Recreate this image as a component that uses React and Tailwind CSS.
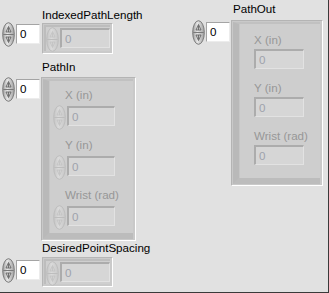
import React from "react";

function Spinner({ disabled = false, id }) {
  const stroke = disabled ? "#bdbdbd" : "#7a7a7a";
  const arrow = disabled ? "#c2c2c2" : "#5a5a5a";
  return (
    <svg width="13" height="25" viewBox="0 0 13 25" className="block shrink-0">
      <defs>
        <linearGradient id={id} x1="0" x2="1" y1="0" y2="0">
          {disabled ? (
            <>
              <stop offset="0" stopColor="#c4c4c4" />
              <stop offset="0.4" stopColor="#dadada" />
              <stop offset="1" stopColor="#c8c8c8" />
            </>
          ) : (
            <>
              <stop offset="0" stopColor="#9c9c9c" />
              <stop offset="0.4" stopColor="#e6e6e6" />
              <stop offset="1" stopColor="#a2a2a2" />
            </>
          )}
        </linearGradient>
      </defs>
      <ellipse cx="6.5" cy="12.5" rx="5.8" ry="11.8" fill={`url(#${id})`} stroke={stroke} strokeWidth="1" />
      <line x1="1.2" x2="11.8" y1="12.5" y2="12.5" stroke={stroke} strokeWidth="1" />
      <path d="M6.5 4.5 L9 10 L4 10 Z" fill={disabled ? "#d4d4d4" : "#cfcfcf"} stroke={arrow} strokeWidth="0.8" />
      <line x1="6.5" x2="6.5" y1="5.5" y2="10" stroke={arrow} strokeWidth="0.8" />
      <path d="M6.5 20.5 L9 15 L4 15 Z" fill={disabled ? "#d4d4d4" : "#cfcfcf"} stroke={arrow} strokeWidth="0.8" />
      <line x1="6.5" x2="6.5" y1="15" y2="19.5" stroke={arrow} strokeWidth="0.8" />
    </svg>
  );
}

function IndexDisplay({ id }) {
  return (
    <div className="flex items-start">
      <Spinner id={id} />
      <div className="mt-[2px] ml-[1px] w-[24px] h-[20px] bg-white border border-t-[#a4a4a4] border-l-[#a4a4a4] border-r-[#ececec] border-b-[#ececec] pl-[3px] leading-[18px] text-black">
        0
      </div>
    </div>
  );
}

function DisabledBox({ w }) {
  return (
    <div
      className="h-[20px] bg-[#d6d6d6] border-t-2 border-l-2 border-t-[#acacac] border-l-[#acacac] border-r border-b border-r-[#e2e2e2] border-b-[#e2e2e2] pl-[3px] leading-[17px] text-[#9ea2ac]"
      style={{ width: w }}
    >
      0
    </div>
  );
}

function ClusterField({ label, withSpinner, id, first }) {
  return (
    <div className={first ? "" : withSpinner ? "mt-[8px]" : "mt-[12px]"}>
      <div className={`h-[14px] text-[#979797] ${withSpinner ? "ml-[12px]" : "ml-[0px]"}`}>{label}</div>
      {withSpinner ? (
        <div className="mt-[3px] flex items-start">
          <Spinner disabled id={id} />
          <div className="ml-[1px] mt-[1px]">
            <DisabledBox w={48} />
          </div>
        </div>
      ) : (
        <div className="mt-[2px]">
          <DisabledBox w={50} />
        </div>
      )}
    </div>
  );
}

function ClusterFrame({ w, h, children, padL, padT }) {
  return (
    <div
      className="bg-[#c9c9c9] border border-t-[#b4b4b4] border-l-[#b4b4b4] border-r-white border-b-white pt-[1px] pr-[2px] pl-[1px]"
      style={{ width: w, height: h }}
    >
      <div className="h-[calc(100%-1px)] bg-[#cecece] border-l-[6px] border-l-[#b9b9b9] border-b-[6px] border-b-[#bcbcbc] border-t-2 border-t-[#c1c1c1]">
        <div className="h-full border-l border-l-[#c6c6c6]" style={{ paddingLeft: padL, paddingTop: padT }}>
          {children}
        </div>
      </div>
    </div>
  );
}

function SimpleArrayFrame({ h, id }) {
  return (
    <div
      className="w-[71px] bg-[#cacaca] border border-t-[#b6b6b6] border-l-[#b6b6b6] border-r-white border-b-white pt-[1px] pl-[1px] pr-[2px]"
      style={{ height: h }}
    >
      <div className="h-[calc(100%-2px)] bg-[#cfcfcf] border-t-2 border-l-2 border-t-[#bdbdbd] border-l-[#bdbdbd] flex items-start">
        <Spinner disabled id={id} />
        <div className="ml-[1px] mt-[1px]">
          <DisabledBox w={50} />
        </div>
      </div>
    </div>
  );
}

export default function App() {
  return (
    <div className="w-[329px] h-[293px] bg-[#e1e1e1] border-r border-b border-r-[#3a3a3a] border-b-[#3a3a3a] flex text-[11.6px] leading-[14px] font-['Liberation_Sans',Arial,sans-serif] text-black overflow-hidden">
      {/* Left column */}
      <div className="w-[140px] flex flex-col">
        <div className="mt-[8px] ml-[42px] h-[14px]">IndexedPathLength</div>
        <div className="flex items-start ml-[2px]">
          <IndexDisplay id="g1" />
          <div className="ml-[2px] mt-[1px]">
            <SimpleArrayFrame h={31} id="g2" />
          </div>
        </div>

        <div className="mt-[6px] ml-[42px] h-[14px]">PathIn</div>
        <div className="mt-[3px] flex items-start ml-[2px]">
          <IndexDisplay id="g3" />
          <div className="ml-[1px]">
            <ClusterFrame w={95} h={164} padL={3} padT={7}>
              <ClusterField label="X (in)" withSpinner id="g4" first />
              <ClusterField label="Y (in)" withSpinner id="g5" />
              <ClusterField label="Wrist (rad)" withSpinner id="g6" />
            </ClusterFrame>
          </div>
        </div>

        <div className="ml-[42px] h-[14px]">DesiredPointSpacing</div>
        <div className="mt-[2px] flex items-start ml-[2px]">
          <div className="mt-[1px]">
            <IndexDisplay id="g7" />
          </div>
          <div className="ml-[2px]">
            <SimpleArrayFrame h={30} id="g8" />
          </div>
        </div>
      </div>

      {/* Right column */}
      <div className="ml-[52px] flex flex-col">
        <div className="mt-[2px] ml-[41px] h-[14px]">PathOut</div>
        <div className="mt-[4px] flex items-start">
          <IndexDisplay id="g9" />
          <div className="ml-[1px]">
            <ClusterFrame w={92} h={166} padL={14} padT={9}>
              <ClusterField label="X (in)" id="g10" first />
              <ClusterField label="Y (in)" id="g11" />
              <ClusterField label="Wrist (rad)" id="g12" />
            </ClusterFrame>
          </div>
        </div>
      </div>
    </div>
  );
}
